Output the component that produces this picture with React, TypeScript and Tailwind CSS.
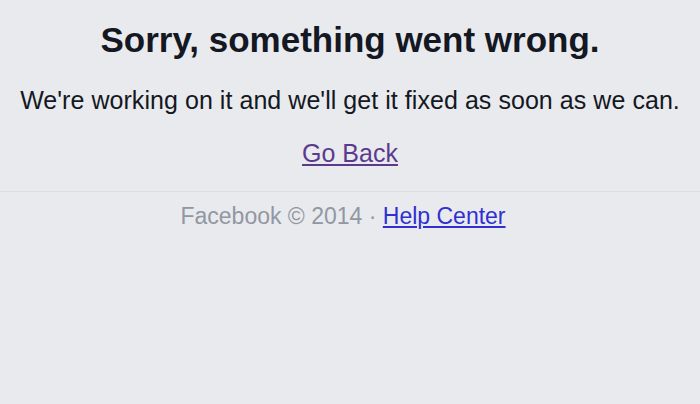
export default function App() {
  return (
    <main className="min-h-[404px] w-full bg-[#e9eaed] font-['Liberation_Sans',Arial,sans-serif] antialiased">
      {/* Error message */}
      <div className="flex flex-col items-center pt-[18px] text-center">
        <h1 className="text-[35px] font-bold leading-[44px] text-[#141823]">Sorry, something went wrong.</h1>
        <p className="mt-[25px] text-[25px] tracking-[0.05px] leading-[26px] text-[#141823]">
          We're working on it and we'll get it fixed as soon as we can.
        </p>
        <a href="#" className="mt-[27px] text-[25px] leading-[26px] text-[#5b3a8e] underline">
          Go Back
        </a>
      </div>

      {/* Footer */}
      <div className="mt-[25px] border-t border-[#dcdee3] pt-[11px] pr-[14px] text-center text-[23px] leading-[26px] text-[#9197a3]">
        Facebook © 2014 ·{' '}
        <a href="#" className="text-[#3030d0] underline">
          Help Center
        </a>
      </div>
    </main>
  );
}
